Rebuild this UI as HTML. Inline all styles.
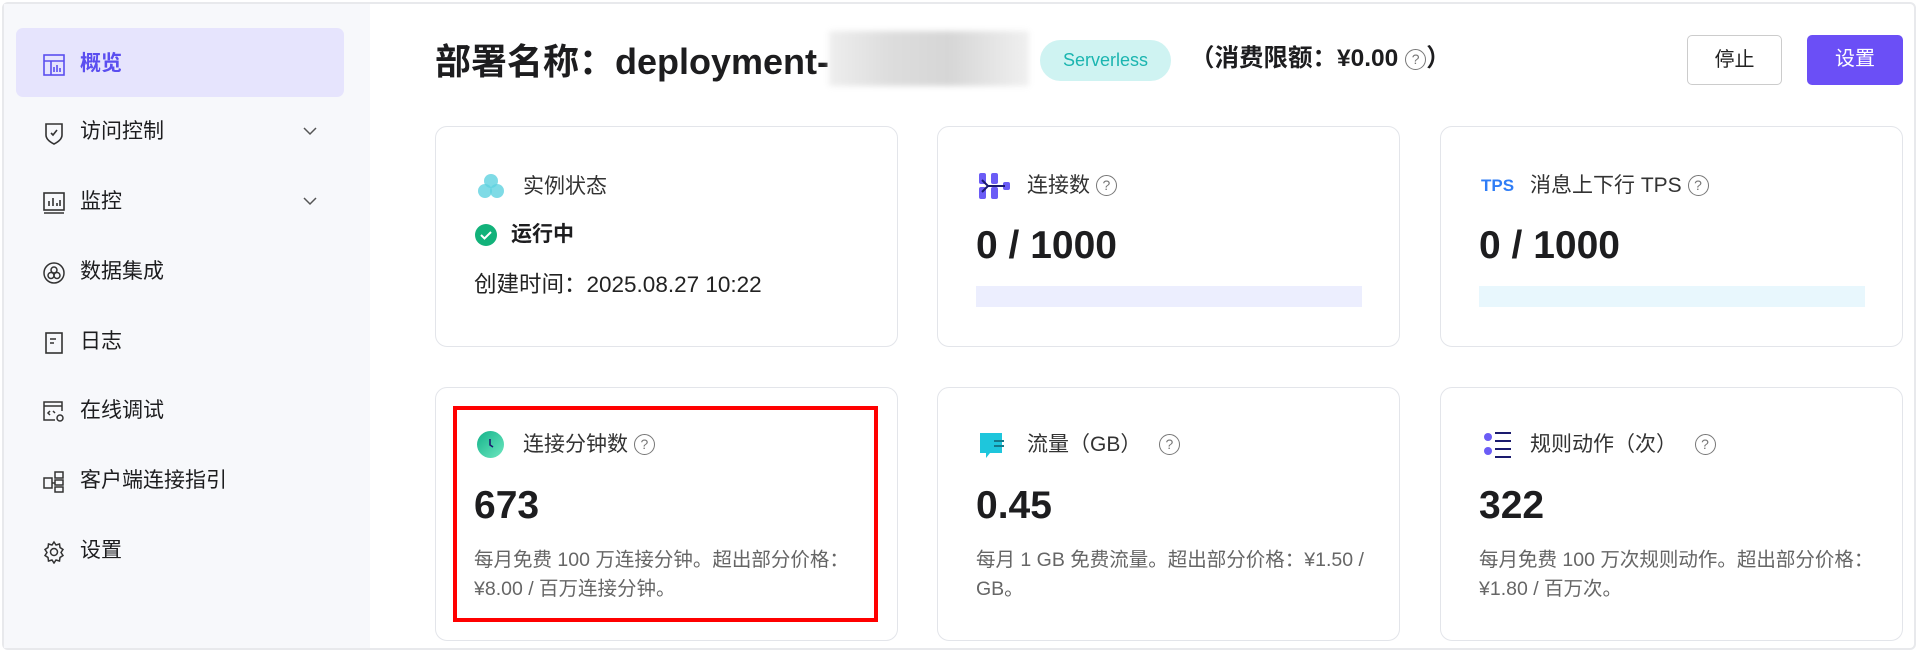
<!DOCTYPE html>
<html><head><meta charset="utf-8"><style>
*{margin:0;padding:0;box-sizing:border-box}
body{width:1920px;height:654px;background:#fff;font-family:"Liberation Sans","Noto Sans CJK SC",sans-serif;color:#1d1d1f;position:relative;overflow:hidden}
.frame{position:absolute;left:2px;top:2px;width:1914px;height:648px;border:2px solid #e8e9ec;border-radius:6px}
.side{position:absolute;left:4px;top:4px;width:366px;height:644px;background:#f7f8fb}
.act{position:absolute;left:16px;top:28px;width:328px;height:69px;background:#e6e4fd;border-radius:7px}
.mi{position:absolute;left:80px;font-size:21px;line-height:24px;color:#1d1d1f;transform:translateY(-12px)}
.ic{position:absolute;left:42px;transform:translateY(-11px)}
.chev{position:absolute;left:302px;transform:translateY(-6px)}
.h1{position:absolute;left:435px;top:40px;font-size:36px;font-weight:bold;line-height:44px}
.blur{position:absolute;left:829px;top:31px;width:200px;height:55px;background:linear-gradient(90deg,#eee,#ddd 30%,#d6d6d6 60%,#f0f0f0);filter:blur(3px)}
.pill{position:absolute;left:1040px;top:40px;width:131px;height:41px;border-radius:21px;background:#cff3f2;color:#1bb5b0;font-size:18px;line-height:41px;text-align:center}
.lim{position:absolute;left:1190px;top:44px;font-size:24.5px;font-weight:bold;line-height:30px}
.q{display:inline-block;width:21px;height:21px;border:1.5px solid #777;border-radius:50%;font-size:14px;line-height:18px;text-align:center;color:#777;font-weight:normal;vertical-align:2px}
.btn{position:absolute;top:35px;height:50px;border-radius:5px;font-size:20px;line-height:48px;text-align:center}
.card{position:absolute;border:1.5px solid #e3e5ea;border-radius:12px;background:#fff}
.t{position:absolute;font-size:21px;line-height:24px;color:#333;transform:translateY(-12px)}
.num{position:absolute;font-size:39px;font-weight:bold;line-height:46px;transform:translateY(-23px)}
.d{position:absolute;font-size:19.5px;line-height:29px;color:#666;width:420px;white-space:nowrap}
</style></head><body>
<div class="frame"></div>
<div class="side"></div>
<div class="act"></div>
<svg class="ic" style="top:64px" width="24" height="24" viewBox="0 0 24 24" fill="none" stroke="#5b4ef0" stroke-width="1.6"><rect x="2" y="2" width="20" height="20"/><path d="M2 8h20M9 8v14M12 14v5M15 12v7M18 15v4"/></svg>
<div class="mi" style="top:64px;color:#5b4ef0;font-weight:bold">概览</div>
<svg class="ic" style="top:132px" width="24" height="24" viewBox="0 0 24 24" fill="none" stroke="#333" stroke-width="1.6"><path d="M4 3h16v11c0 4-4 7-8 9-4-2-8-5-8-9z"/><path d="M9 12l2 2 4-5"/></svg>
<div class="mi" style="top:132px">访问控制</div>
<svg class="chev" style="top:132px" width="16" height="10" viewBox="0 0 16 10" fill="none" stroke="#555" stroke-width="1.5"><path d="M2 2l6 6 6-6"/></svg>
<svg class="ic" style="top:202px" width="24" height="24" viewBox="0 0 24 24" fill="none" stroke="#333" stroke-width="1.6"><rect x="2" y="2" width="20" height="17"/><path d="M2 22h20M7 15v-5M11 15V7M15 15v-3M18 15V9"/></svg>
<div class="mi" style="top:202px">监控</div>
<svg class="chev" style="top:202px" width="16" height="10" viewBox="0 0 16 10" fill="none" stroke="#555" stroke-width="1.5"><path d="M2 2l6 6 6-6"/></svg>
<svg class="ic" style="top:272px" width="24" height="24" viewBox="0 0 24 24" fill="none" stroke="#333" stroke-width="1.5"><circle cx="12" cy="12" r="10"/><circle cx="12" cy="9" r="3"/><circle cx="9" cy="14.5" r="3"/><circle cx="15" cy="14.5" r="3"/></svg>
<div class="mi" style="top:272px">数据集成</div>
<svg class="ic" style="top:342px" width="24" height="24" viewBox="0 0 24 24" fill="none" stroke="#333" stroke-width="1.6"><rect x="4" y="2" width="16" height="20"/><path d="M8 8h6M8 12h4"/></svg>
<div class="mi" style="top:342px">日志</div>
<svg class="ic" style="top:411px" width="24" height="24" viewBox="0 0 24 24" fill="none" stroke="#333" stroke-width="1.5"><path d="M13 20H2V2h18v9M2 6h18M8 11l-2 2 2 2M11 11l2 2"/><circle cx="18" cy="18" r="3"/></svg>
<div class="mi" style="top:411px">在线调试</div>
<svg class="ic" style="top:481px" width="24" height="24" viewBox="0 0 24 24" fill="none" stroke="#333" stroke-width="1.5"><rect x="2" y="8" width="8" height="10"/><rect x="13" y="2" width="8" height="6"/><rect x="13" y="10" width="8" height="5"/><rect x="13" y="17" width="8" height="5"/><path d="M10 13h3"/></svg>
<div class="mi" style="top:481px">客户端连接指引</div>
<svg class="ic" style="top:551px" width="24" height="24" viewBox="0 0 24 24" fill="none" stroke="#333" stroke-width="1.5"><circle cx="12" cy="12" r="3.5"/><path d="M12 2l2 3 3.5-1 .5 3.5 3 2-2 3 2 3-3 2-.5 3.5-3.5-1-2 3-2-3-3.5 1-.5-3.5-3-2 2-3-2-3 3-2 .5-3.5 3.5 1z"/></svg>
<div class="mi" style="top:551px">设置</div>

<div class="h1">部署名称：deployment-</div>
<div class="blur"></div>
<div class="pill">Serverless</div>
<div class="lim">（消费限额：¥0.00 <span class="q">?</span>）</div>
<div class="btn" style="left:1687px;width:95px;border:1.5px solid #ccc;color:#222">停止</div>
<div class="btn" style="left:1807px;width:96px;background:#6b4ff6;color:#fff">设置</div>

<div class="card" style="left:435px;top:126px;width:463px;height:221px"></div>
<div class="card" style="left:937px;top:126px;width:463px;height:221px"></div>
<div class="card" style="left:1440px;top:126px;width:463px;height:221px"></div>
<svg style="position:absolute;left:476px;top:172px" width="30" height="30" viewBox="0 0 30 30"><g fill="#5fd2e0" fill-opacity=".8"><circle cx="15" cy="9" r="7"/><circle cx="9" cy="19" r="7"/><circle cx="21" cy="19" r="7"/></g></svg>
<div class="t" style="left:523px;top:187px">实例状态</div>
<svg style="position:absolute;left:475px;top:224px" width="22" height="22" viewBox="0 0 22 22"><circle cx="11" cy="11" r="11" fill="#12b27a"/><path d="M6 11l3.5 3.5L16 8" fill="none" stroke="#fff" stroke-width="2"/></svg>
<div class="t" style="left:511px;top:235px;font-weight:bold;color:#1d1d1f">运行中</div>
<div class="t" style="left:474px;top:285px;color:#222;font-size:22.5px">创建时间：2025.08.27 10:22</div>

<svg style="position:absolute;left:979px;top:173px" width="32" height="26" viewBox="0 0 32 26"><g fill="#6b5cf6"><rect x="0" y="0" width="7" height="11" rx="2"/><rect x="0" y="14" width="7" height="12" rx="2"/><rect x="12" y="0" width="7" height="11" rx="2"/><rect x="12" y="14" width="7" height="12" rx="2"/><rect x="24" y="9" width="7" height="8" rx="2"/></g><path d="M3 7l6 6-6 6M9 13h17" fill="none" stroke="#1a1a6e" stroke-width="2"/></svg>
<div class="t" style="left:1027px;top:186px">连接数 <span class="q">?</span></div>
<div class="num" style="left:976px;top:246px">0 / 1000</div>
<div style="position:absolute;left:976px;top:286px;width:386px;height:21px;background:#eceefe"></div>

<div class="t" style="left:1481px;top:186px;color:#2f7df6;font-weight:bold;font-size:17px">TPS</div>
<div class="t" style="left:1530px;top:186px">消息上下行 TPS <span class="q">?</span></div>
<div class="num" style="left:1479px;top:246px">0 / 1000</div>
<div style="position:absolute;left:1479px;top:286px;width:386px;height:21px;background:#e8f7fd"></div>

<div class="card" style="left:435px;top:387px;width:463px;height:254px"></div>
<div class="card" style="left:937px;top:387px;width:463px;height:254px"></div>
<div class="card" style="left:1440px;top:387px;width:463px;height:254px"></div>
<div style="position:absolute;left:453px;top:406px;width:425px;height:216px;border:4px solid #f00"></div>

<svg style="position:absolute;left:477px;top:431px" width="27" height="27" viewBox="0 0 27 27"><defs><linearGradient id="g" x1="0" y1="0" x2="1" y2="1"><stop offset="0" stop-color="#13b28a"/><stop offset="1" stop-color="#6ee8c0"/></linearGradient></defs><circle cx="13.5" cy="13.5" r="13.5" fill="url(#g)"/><path d="M13 8v6l3 2" fill="none" stroke="#1a1a6e" stroke-width="1.6"/></svg>
<div class="t" style="left:523px;top:445px">连接分钟数 <span class="q">?</span></div>
<div class="num" style="left:474px;top:506px">673</div>
<div class="d" style="left:474px;top:546px">每月免费 100 万连接分钟。超出部分价格：<br>¥8.00 / 百万连接分钟。</div>

<svg style="position:absolute;left:980px;top:431px" width="28" height="28" viewBox="0 0 28 28"><path d="M0 2h22v20H10l-4 5v-5H0z" fill="#1ec6dc"/><path d="M14 10h10M14 15h10" stroke="#137a8a" stroke-width="2"/></svg>
<div class="t" style="left:1027px;top:445px">流量（GB） &nbsp; <span class="q">?</span></div>
<div class="num" style="left:976px;top:506px">0.45</div>
<div class="d" style="left:976px;top:546px">每月 1 GB 免费流量。超出部分价格：¥1.50 /<br>GB。</div>

<svg style="position:absolute;left:1483px;top:432px" width="30" height="26" viewBox="0 0 30 26"><circle cx="5" cy="5" r="4" fill="#6b5cf6"/><circle cx="5" cy="19" r="4" fill="#6b5cf6"/><path d="M12 1h16M12 9h16M12 17h16M12 25h16" stroke="#1a1a6e" stroke-width="2"/></svg>
<div class="t" style="left:1530px;top:445px">规则动作（次） &nbsp; <span class="q">?</span></div>
<div class="num" style="left:1479px;top:506px">322</div>
<div class="d" style="left:1479px;top:546px">每月免费 100 万次规则动作。超出部分价格：<br>¥1.80 / 百万次。</div>
</body></html>
